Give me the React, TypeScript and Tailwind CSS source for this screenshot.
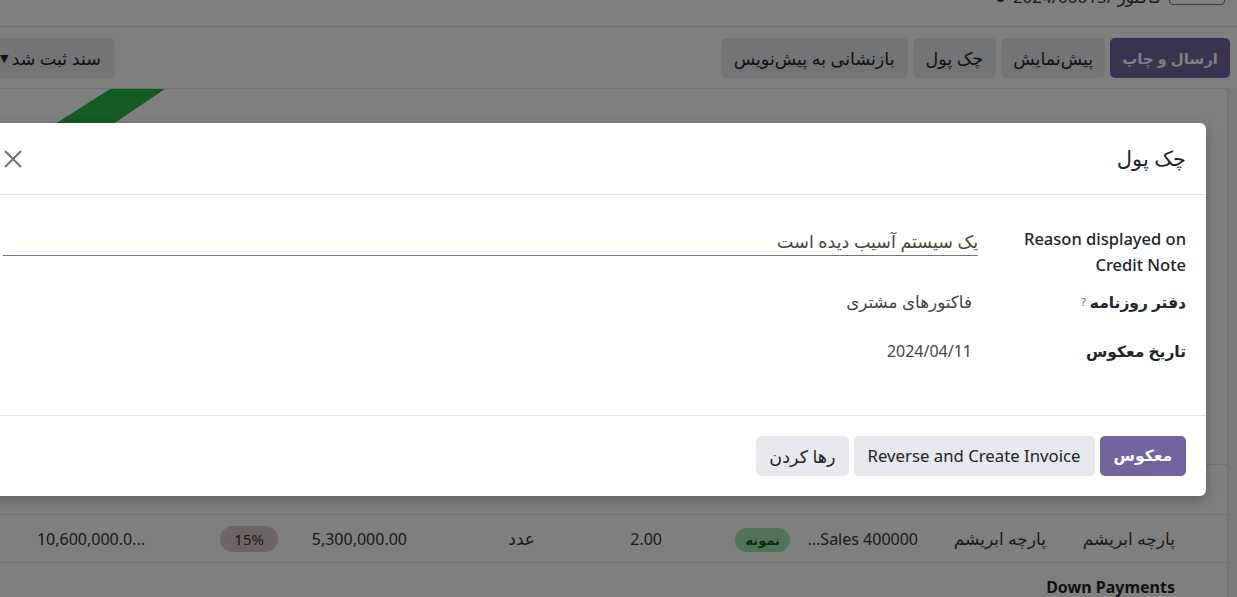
import React from "react";

const FONT = { fontFamily: '"Noto Sans", "DejaVu Sans", sans-serif' };

function GrayBtn({
  children,
  className = "",
  size = "text-[17.5px]",
}: {
  children: React.ReactNode;
  className?: string;
  size?: string;
}) {
  return (
    <div className={`h-[40px] flex items-center rounded-[5px] bg-[#e7e9ed] text-[#1f2328] ${size} ${className}`}>
      {children}
    </div>
  );
}

export default function App() {
  return (
    <div className="relative w-[1237px] h-[597px] overflow-hidden bg-[#f4f4f5]" style={FONT}>
      {/* Page behind */}
      <div className="bg-white">
        <div className="h-[27px] border-b border-[#dcdde0] flex justify-end pr-[12px] overflow-hidden" dir="ltr">
          <div className="flex items-center gap-[8px] -mt-[13px] h-[20px] text-[17px] text-[#333]">
            <span className="w-[9px] h-[9px] rounded-full bg-[#333]" />
            <span>2024/00013/ فاکتور</span>
            <span className="w-[56px] h-[16px] rounded-[4px] border border-[#71639e]" />
          </div>
        </div>
        <div className="h-[61px] flex justify-between items-start pt-[11px] pr-[7px]" dir="ltr">
          <GrayBtn className="-ml-[10px] pl-[10px] pr-[14px] gap-[3px]">
            <span className="text-[11px]">▼</span>
            <span dir="rtl">سند ثبت شد</span>
          </GrayBtn>
          <div className="flex gap-[5px]" dir="rtl">
            <div className="h-[40px] flex items-center rounded-[5px] bg-[#71639e] text-white text-[15px] font-bold px-[12px]">
              ارسال و چاپ
            </div>
            <GrayBtn className="px-[12px]">پیش‌نمایش</GrayBtn>
            <GrayBtn className="px-[13px]">چک پول</GrayBtn>
            <GrayBtn className="px-[13px]">بازنشانی به پیش‌نویس</GrayBtn>
          </div>
        </div>
      </div>
      <div className="relative w-[1228px] bg-white border-t border-r border-[#e2e2e4] h-[520px]">
        <div
          className="absolute top-0 left-[55px] w-[110px] h-[35px] bg-[#2ab348]"
          style={{ clipPath: "polygon(55px 0, 110px 0, 58px 35px, 0 35px)" }}
        />
        <div className="h-[375px]" />
        <div dir="rtl" className="border-t border-[#e0e0e0]">
          <div className="h-[50px] border-b border-[#e0e0e0] flex items-end pr-[52px] text-[16px] font-bold text-[#222]">
            <span className="mb-[18px]">کد</span>
          </div>
          <div className="h-[48px] border-b border-[#e0e0e0] flex items-center pr-[52px] text-[17px] text-[#333]">
            <div className="w-[129px]">پارچه ابریشم</div>
            <div className="w-[128px]">پارچه ابریشم</div>
            <div className="w-[128px] text-[16px]"><span dir="ltr">...Sales 400000</span></div>
            <div className="w-[128px]">
              <span className="inline-block rounded-full bg-[#a7e6b3] text-[#0e5b22] text-[13px] font-bold px-[10px] leading-[24px]">نمونه</span>
            </div>
            <div className="w-[127px] text-[16px]">2.00</div>
            <div className="w-[128px]">عدد</div>
            <div className="w-[129px] text-[16px]">5,300,000.00</div>
            <div className="w-[133px]">
              <span className="inline-block rounded-full bg-[#dac8cc] text-[#333] text-[15px] px-[14px] leading-[26px]">15%</span>
            </div>
            <div className="text-[16px]"><span dir="ltr">10,600,000.0...</span></div>
          </div>
          <div className="h-[48px] flex items-center pr-[52px] text-[16px] font-bold text-[#222]">Down Payments</div>
        </div>
      </div>

      {/* Backdrop */}
      <div className="absolute inset-0 bg-black/50" />

      {/* Dialog */}
      <div
        dir="rtl"
        className="absolute top-[123px] left-[-17px] w-[1223px] bg-white rounded-[6px] shadow-[0_4px_12px_rgba(0,0,0,0.25)] text-[#212529]"
      >
        <div className="h-[72px] flex items-center justify-between px-[20px] border-b border-[#dee2e6]">
          <div className="text-[21px]">چک پول</div>
          <svg width="20" height="20" viewBox="0 0 20 20" className="text-[#6c6c6c]">
            <path d="M2 2 L18 18 M18 2 L2 18" stroke="currentColor" strokeWidth="1.8" />
          </svg>
        </div>
        <div className="px-[20px] pt-[31px] pb-[51px] text-[16px]">
          <div className="flex mb-[11px]">
            <div className="w-[208px] shrink-0 font-medium leading-[26px] text-[16.5px]">
              <div dir="ltr" className="text-right">
                Reason displayed on
                <br />
                Credit Note
              </div>
            </div>
            <div className="flex-1">
              <div className="h-[30px] border-b border-[#76708f] flex items-center text-[#444] text-[17.5px] pt-[2px]">
                یک سیستم آسیب دیده است
              </div>
            </div>
          </div>
          <div className="flex mb-[23px] leading-[26px]">
            <div className="w-[208px] shrink-0 font-bold text-[15.5px]">
              دفتر روزنامه<sup className="text-[#0180a5] text-[11px] font-normal mr-[4px] relative -top-[2px]">?</sup>
            </div>
            <div className="flex-1 pr-[6px] text-[#444] text-[16.8px]">فاکتورهای مشتری</div>
          </div>
          <div className="flex leading-[26px]">
            <div className="w-[208px] shrink-0 font-bold text-[15.5px]">تاریخ معکوس</div>
            <div className="flex-1 pr-[6px] text-[#444]">2024/04/11</div>
          </div>
        </div>
        <div className="border-t border-[#dee2e6] px-[20px] pt-[20px] pb-[20px] flex gap-[5px]">
          <div className="h-[40px] flex items-center rounded-[5px] bg-[#71639e] text-white text-[15.5px] font-bold px-[14px]">
            معکوس
          </div>
          <GrayBtn className="px-[14px]" size="text-[16.75px]">
            <span dir="ltr">Reverse and Create Invoice</span>
          </GrayBtn>
          <GrayBtn className="px-[13px]">رها کردن</GrayBtn>
        </div>
      </div>
    </div>
  );
}
